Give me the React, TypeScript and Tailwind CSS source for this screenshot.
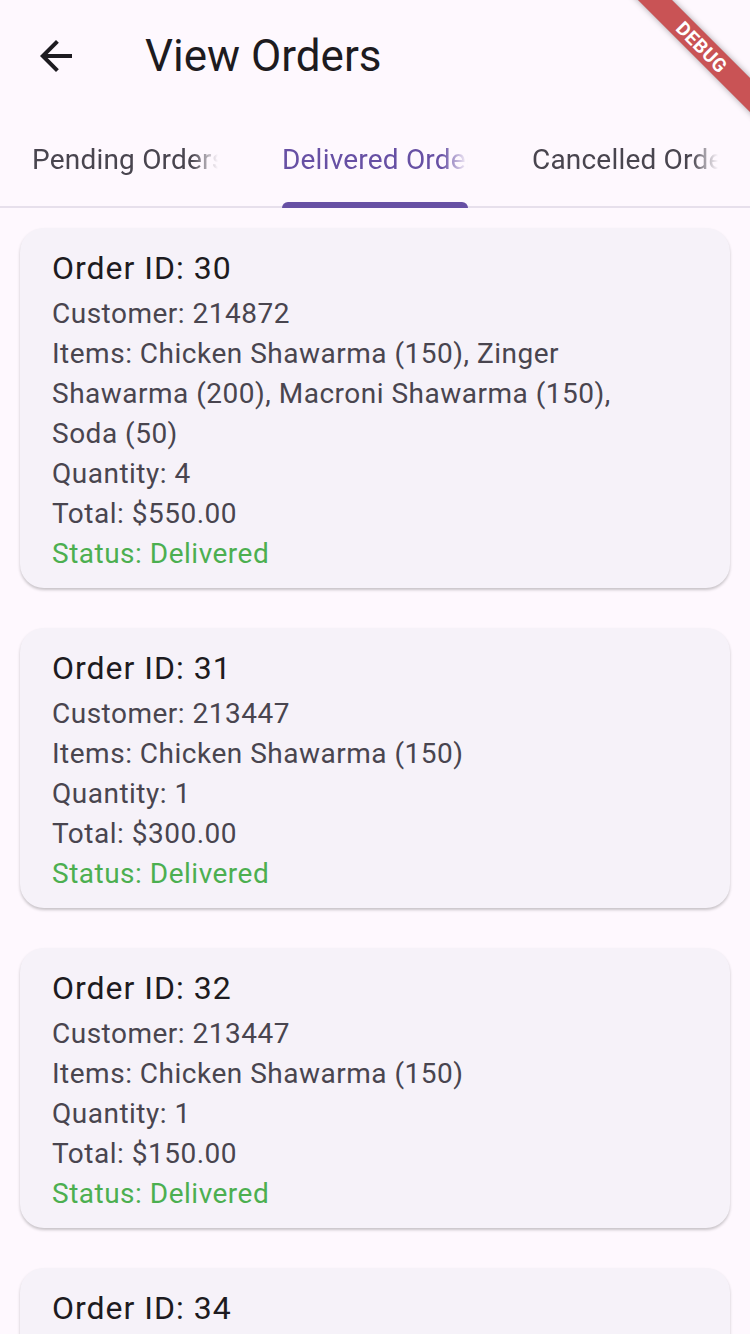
import { useState } from 'react'

type Order = {
  id: number
  customer: string
  items: string
  quantity: number
  total: string
}

const orders: Order[] = [
  {
    id: 30,
    customer: '214872',
    items: 'Chicken Shawarma (150), Zinger Shawarma (200), Macroni Shawarma (150), Soda (50)',
    quantity: 4,
    total: '$550.00',
  },
  { id: 31, customer: '213447', items: 'Chicken Shawarma (150)', quantity: 1, total: '$300.00' },
  { id: 32, customer: '213447', items: 'Chicken Shawarma (150)', quantity: 1, total: '$150.00' },
  { id: 34, customer: '213447', items: 'Chicken Shawarma (150)', quantity: 1, total: '$150.00' },
]

const tabs = ['Pending Orders', 'Delivered Orders', 'Cancelled Orders']

function OrderCard({ order }: { order: Order }) {
  return (
    <div className="mx-[20px] rounded-[24px] bg-[#f6f2f9] shadow-[0_2px_3px_rgba(0,0,0,0.22)]">
      <div className="pl-[32px] pr-[77px] pt-[16px] pb-[14px]">
        <p className="mb-[2px] text-[32px] leading-[48px] tracking-[1px] text-[#1d1b20]">Order ID: {order.id}</p>
        <div className="text-[28px] leading-[40px] tracking-[0.5px] text-[#49454f]">
          <p>Customer: {order.customer}</p>
          <p>Items: {order.items}</p>
          <p>Quantity: {order.quantity}</p>
          <p>Total: {order.total}</p>
          <p className="text-[#4caf50]">Status: Delivered</p>
        </div>
      </div>
    </div>
  )
}

export default function App() {
  const [active, setActive] = useState(1)

  return (
    <div className="relative h-[1334px] w-[750px] overflow-hidden bg-[#fef8fe] font-['Roboto',sans-serif]">
      {/* app bar */}
      <div className="flex h-[112px] items-center">
        <button type="button" className="flex h-[112px] w-[112px] items-center justify-center">
          <svg width="48" height="48" viewBox="0 0 24 24" fill="#1d1b20">
            <path d="M20 11H7.83l5.59-5.59L12 4l-8 8 8 8 1.41-1.41L7.83 13H20v-2z" />
          </svg>
        </button>
        <h1 className="ml-[33px] text-[44px] leading-[56px] text-[#1d1b20]">View Orders</h1>
      </div>

      {/* tabs */}
      <div className="relative flex h-[96px] border-b-2 border-[#e7e0ec]">
        {tabs.map((t, i) => (
          <button
            key={t}
            type="button"
            onClick={() => setActive(i)}
            className="relative -mb-[2px] flex w-[250px] items-center px-[32px]"
          >
            <span
              className={`block w-full overflow-hidden whitespace-nowrap text-left text-[28px] leading-[40px] tracking-[0.2px] [mask-image:linear-gradient(to_right,black_calc(100%-26px),transparent)] ${
                i === active ? 'text-[#6750a4]' : 'text-[#49454f]'
              }`}
            >
              {t}
            </span>
            {i === active && (
              <span className="absolute bottom-0 left-[32px] right-[32px] h-[6px] rounded-t-[6px] bg-[#6750a4]" />
            )}
          </button>
        ))}
      </div>

      {/* list */}
      <div className="flex flex-col gap-[40px] pt-[20px]">
        {orders.map((o) => (
          <OrderCard key={o.id} order={o} />
        ))}
      </div>

      {/* debug banner */}
      <div className="pointer-events-none absolute left-[602px] top-[35px] flex h-[24px] w-[200px] rotate-45 items-center justify-center bg-[rgba(183,28,28,0.75)] shadow-[0_0_6px_rgba(0,0,0,0.35)]">
        <span className="text-[19px] font-bold leading-none tracking-[0.5px] text-white">DEBUG</span>
      </div>
    </div>
  )
}
